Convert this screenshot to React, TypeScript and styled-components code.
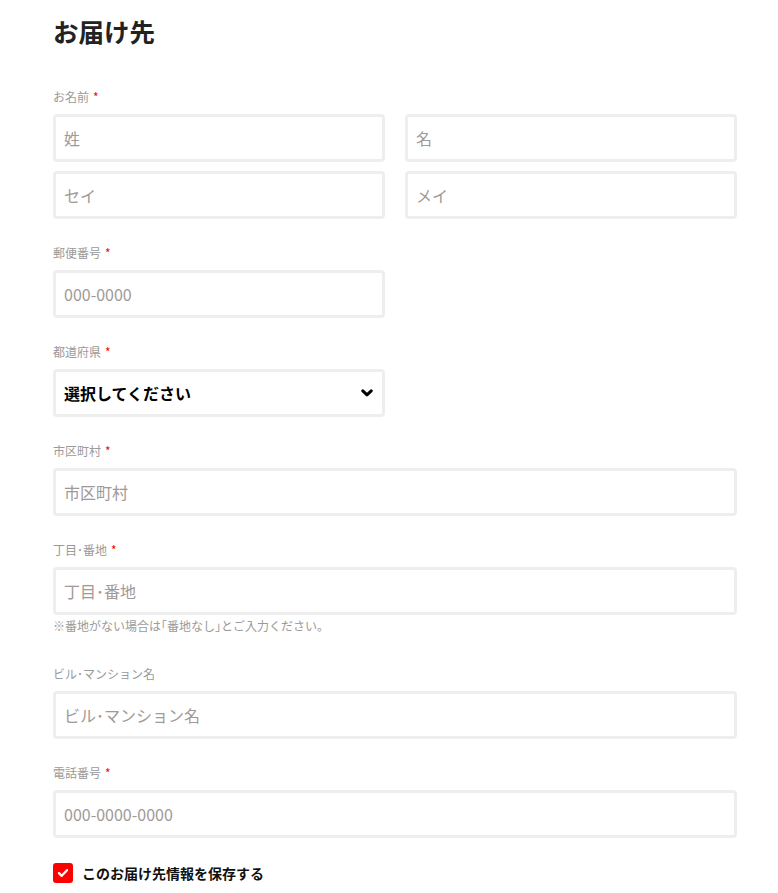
import React from "react";
import styled, { createGlobalStyle } from "styled-components";

const Global = createGlobalStyle`
  html, body { margin: 0; padding: 0; background: #fff; }
  body { font-family: "Noto Sans CJK JP", "Noto Sans", sans-serif; color: #222; }
  * { box-sizing: border-box; }
`;

const Page = styled.div`
  width: 778px;
  padding: 13px 41px 0 53px;
`;

const Title = styled.h2`
  margin: 0 0 39px;
  font-size: 25.5px;
  line-height: 36px;
  font-weight: 700;
  color: #222;
`;

const Group = styled.div<{ $gap?: number; $top?: number }>`
  display: flex;
  flex-direction: column;
  margin-top: ${(p) => p.$top ?? 0}px;
  margin-bottom: ${(p) => p.$gap ?? 25}px;
`;

const Label = styled.div`
  font-size: 12px;
  line-height: 17px;
  color: #9a9a9a;
  margin-bottom: 9px;
`;

const Req = styled.span`
  color: #ff0000;
  margin-left: 4px;
`;

const Grid = styled.div`
  display: grid;
  grid-template-columns: 332px 332px;
  column-gap: 20px;
  row-gap: 9px;
`;

const Input = styled.input<{ $half?: boolean }>`
  width: ${(p) => (p.$half ? "332px" : "100%")};
  height: 48px;
  border: 3px solid #eeeeee;
  border-radius: 4px;
  padding: 0 8px;
  font-family: "Noto Sans CJK JP", sans-serif;
  font-size: 16px;
  color: #222;
  background: #fff;
  outline: none;
  &::placeholder { color: #a09a96; }
`;

const SelectWrap = styled.div`
  position: relative;
  width: 332px;
`;

const Select = styled.select`
  appearance: none;
  width: 100%;
  height: 48px;
  border: 3px solid #eeeeee;
  border-radius: 4px;
  padding: 0 8px;
  font-family: "Noto Sans CJK JP", sans-serif;
  font-size: 16px;
  font-weight: 700;
  color: #000;
  background: #fff;
  outline: none;
`;

const Chevron = styled.svg`
  position: absolute;
  right: 12px;
  top: 20px;
  pointer-events: none;
`;

const Note = styled.div`
  font-size: 12px;
  line-height: 17px;
  color: #9a9a9a;
  margin-top: 2px;
`;

const CheckRow = styled.label`
  display: flex;
  align-items: center;
  gap: 9px;
  font-size: 14px;
  font-weight: 700;
  color: #111;
`;

const Box = styled.span`
  width: 20px;
  height: 20px;
  border-radius: 3px;
  background: #ff0000;
  display: flex;
  align-items: center;
  justify-content: center;
`;

export default function App() {
  return (
    <>
      <Global />
      <Page>
        <Title>お届け先</Title>

        <Group>
          <Label>お名前<Req>*</Req></Label>
          <Grid>
            <Input placeholder="姓" />
            <Input placeholder="名" />
            <Input placeholder="セイ" />
            <Input placeholder="メイ" />
          </Grid>
        </Group>

        <Group>
          <Label>郵便番号<Req>*</Req></Label>
          <Input $half placeholder="000-0000" />
        </Group>

        <Group>
          <Label>都道府県<Req>*</Req></Label>
          <SelectWrap>
            <Select defaultValue="">
              <option value="">選択してください</option>
            </Select>
            <Chevron width="12" height="8" viewBox="0 0 12 8">
              <path d="M1.8 1.8 L6 5.8 L10.2 1.8" fill="none" stroke="#000" strokeWidth="3" strokeLinecap="round" strokeLinejoin="round" />
            </Chevron>
          </SelectWrap>
        </Group>

        <Group>
          <Label>市区町村<Req>*</Req></Label>
          <Input placeholder="市区町村" />
        </Group>

        <Group>
          <Label>丁目･番地<Req>*</Req></Label>
          <Input placeholder="丁目･番地" />
          <Note>※番地がない場合は｢番地なし｣とご入力ください。</Note>
        </Group>

        <Group $top={31}>
          <Label>ビル･マンション名</Label>
          <Input placeholder="ビル･マンション名" />
        </Group>

        <Group $gap={25}>
          <Label>電話番号<Req>*</Req></Label>
          <Input placeholder="000-0000-0000" />
        </Group>

        <CheckRow>
          <Box>
            <svg width="12" height="10" viewBox="0 0 12 10">
              <path d="M2 5.2 L4.7 7.8 L10 2.2" fill="none" stroke="#fff" strokeWidth="2.4" strokeLinecap="round" strokeLinejoin="round" />
            </svg>
          </Box>
          このお届け先情報を保存する
        </CheckRow>
      </Page>
    </>
  );
}
